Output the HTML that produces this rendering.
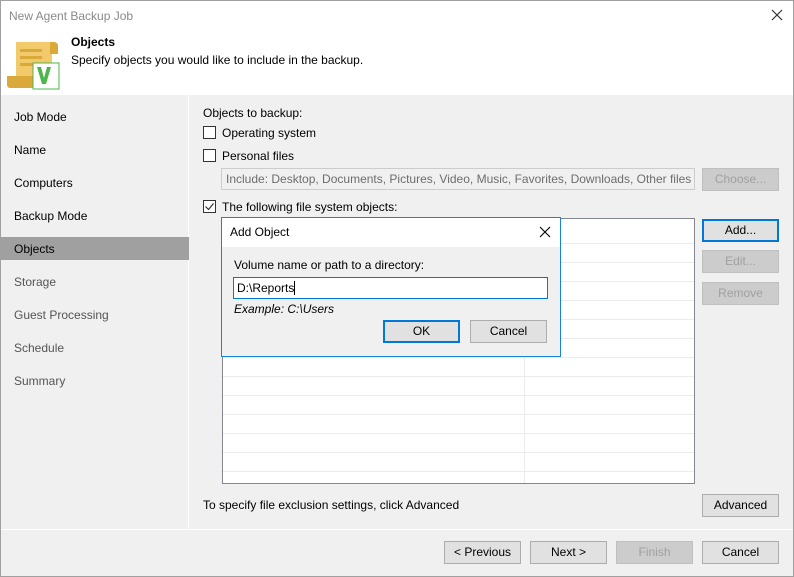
<!DOCTYPE html>
<html><head><meta charset="utf-8"><style>
*{box-sizing:border-box;margin:0;padding:0}
body{width:794px;height:577px;overflow:hidden;background:#f0f0f0;font-family:"Liberation Sans","DejaVu Sans",sans-serif;font-size:12px;color:#000;position:relative}
.a{position:absolute;white-space:nowrap}
.btn{position:absolute;width:77px;height:23px;background:#e1e1e1;border:1px solid #adadad;text-align:center;line-height:21px}
.dis{background:#cccccc;border-color:#bfbfbf;color:#a0a0a0}
.cb{position:absolute;width:13px;height:13px;border:1px solid #333;background:#fff}
.nav{position:absolute;left:14px;color:#000}
</style></head><body>
<div class="a" style="left:0;top:0;width:794px;height:577px;border:1px solid #a0a0a0"></div>
<div class="a" style="left:1px;top:1px;width:792px;height:94px;background:#fff"></div>
<div class="a" style="left:9px;top:9px;color:#8a8a8a">New Agent Backup Job</div>
<svg class="a" style="left:771px;top:9px" width="12" height="12"><path d="M1 1L11 11M11 1L1 11" stroke="#333" stroke-width="1.2"/></svg>
<svg class="a" style="left:6px;top:40px" width="54" height="50">
<path d="M10 2h38a4 4 0 0 1 4 4v8h-6v26H10z" fill="#f2c96b"/>
<path d="M44 2h4a4 4 0 0 1 4 4v8h-8z" fill="#d9a93a"/>
<rect x="14" y="9" width="22" height="3" fill="#d9a93a"/>
<rect x="14" y="16" width="22" height="3" fill="#d9a93a"/>
<rect x="14" y="23" width="16" height="3" fill="#d9a93a"/>
<path d="M1 36h28v12H4a3 3 0 0 1-3-3z" fill="#d9a93a"/>
<rect x="27" y="23" width="26" height="26" fill="#fff" stroke="#4cb748" stroke-width="1"/>
<path d="M31 27l5 17h4l5-17h-4l-3 11-3-11z" fill="#4cb748"/>
</svg>
<div class="a" style="left:71px;top:35px;font-weight:bold">Objects</div>
<div class="a" style="left:71px;top:53px">Specify objects you would like to include in the backup.</div>
<div class="a" style="left:188px;top:95px;width:1px;height:434px;background:#fff"></div>
<div class="a" style="left:1px;top:529px;width:792px;height:1px;background:#fff"></div>
<div class="a" style="left:1px;top:237px;width:188px;height:23px;background:#a0a0a0"></div>
<div class="nav a" style="top:110px">Job Mode</div>
<div class="nav a" style="top:143px">Name</div>
<div class="nav a" style="top:176px">Computers</div>
<div class="nav a" style="top:209px">Backup Mode</div>
<div class="nav a" style="top:242px">Objects</div>
<div class="nav a" style="top:275px;color:#555">Storage</div>
<div class="nav a" style="top:308px;color:#555">Guest Processing</div>
<div class="nav a" style="top:341px;color:#555">Schedule</div>
<div class="nav a" style="top:374px;color:#555">Summary</div>

<div class="a" style="left:203px;top:106px">Objects to backup:</div>
<div class="cb" style="left:203px;top:126px"></div>
<div class="a" style="left:222px;top:126px">Operating system</div>
<div class="cb" style="left:203px;top:149px"></div>
<div class="a" style="left:222px;top:149px">Personal files</div>
<div class="a" style="left:221px;top:168px;width:474px;height:22px;border:1px solid #ccc;background:#f0f0f0;color:#6d6d6d;padding:3px 0 0 4px;overflow:hidden">Include: Desktop, Documents, Pictures, Video, Music, Favorites, Downloads, Other files and folders</div>
<div class="btn dis" style="left:702px;top:168px">Choose...</div>
<div class="cb" style="left:203px;top:200px"></div>
<svg class="a" style="left:203px;top:200px" width="13" height="13"><path d="M2.5 6.5l3 3 5-6" stroke="#333" stroke-width="1.2" fill="none"/></svg>
<div class="a" style="left:222px;top:200px">The following file system objects:</div>
<div class="a" style="left:222px;top:218px;width:473px;height:266px;border:1px solid #828790;background:#fff"></div>
<div class="a" style="left:223px;top:243px;width:471px;height:240px;background:repeating-linear-gradient(to bottom,#ebebeb 0 1px,transparent 1px 19px)"></div>
<div class="a" style="left:524px;top:219px;width:1px;height:264px;background:#ebebeb"></div>
<div class="btn" style="left:702px;top:219px;border:2px solid #0078d7;line-height:19px">Add...</div>
<div class="btn dis" style="left:702px;top:250px">Edit...</div>
<div class="btn dis" style="left:702px;top:282px">Remove</div>
<div class="a" style="left:203px;top:498px">To specify file exclusion settings, click Advanced</div>
<div class="btn" style="left:702px;top:494px">Advanced</div>
<div class="btn" style="left:444px;top:541px">&lt; Previous</div>
<div class="btn" style="left:530px;top:541px">Next &gt;</div>
<div class="btn dis" style="left:616px;top:541px">Finish</div>
<div class="btn" style="left:702px;top:541px">Cancel</div>

<div class="a" style="left:221px;top:217px;width:340px;height:140px;border:1px solid #1883d7;background:#f0f0f0"></div>
<div class="a" style="left:222px;top:218px;width:338px;height:29px;background:#fff"></div>
<div class="a" style="left:230px;top:225px">Add Object</div>
<svg class="a" style="left:539px;top:226px" width="12" height="12"><path d="M1 1L11 11M11 1L1 11" stroke="#000" stroke-width="1.1"/></svg>
<div class="a" style="left:234px;top:258px">Volume name or path to a directory:</div>
<div class="a" style="left:233px;top:277px;width:315px;height:22px;border:1px solid #0078d7;background:#fff;padding:3px 0 0 3px">D:\Reports<span style="display:inline-block;width:1px;height:14px;background:#000;vertical-align:-3px"></span></div>
<div class="a" style="left:234px;top:302px;font-style:italic">Example: C:\Users</div>
<div class="btn" style="left:383px;top:320px;border:2px solid #0078d7;line-height:19px">OK</div>
<div class="btn" style="left:470px;top:320px">Cancel</div>
</body></html>
